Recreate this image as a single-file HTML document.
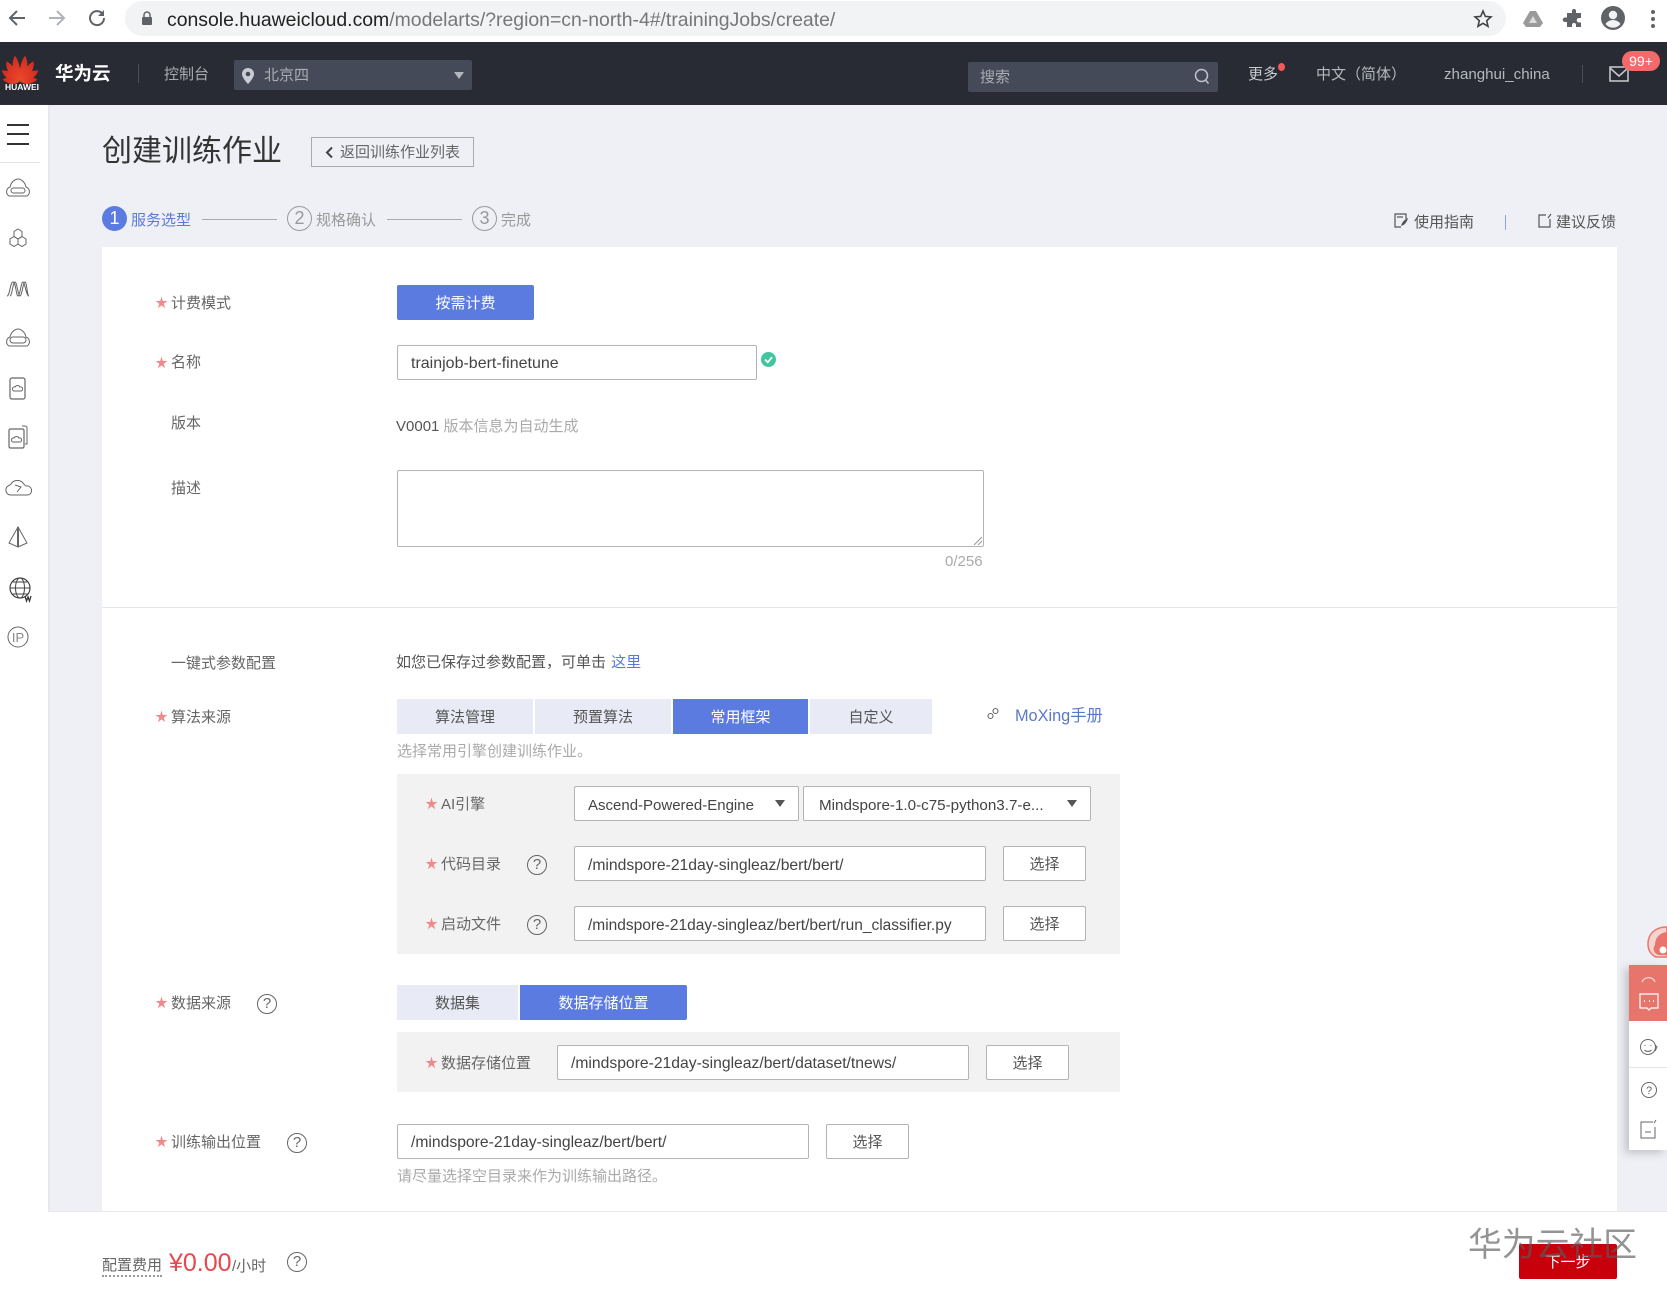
<!DOCTYPE html>
<html lang="zh"><head><meta charset="utf-8"><title>创建训练作业</title>
<style>
*{box-sizing:border-box}
html,body{margin:0;padding:0}
body{width:1667px;height:1297px;position:relative;overflow:hidden;background:#eef0f5;font-family:"Liberation Sans","Noto Sans CJK SC",sans-serif;font-size:15px;color:#555}
.b{position:absolute}
.t{position:absolute;white-space:nowrap;line-height:20px;height:20px;transform:translateY(1px)}
.lab{color:#666}
.star{position:absolute;width:13px;height:13px}
.in{position:absolute;background:#fff;border:1px solid #b4b4b8;border-radius:2px;height:35px;line-height:37px;padding-left:13px;font-size:15.700px;color:#444;white-space:nowrap}
.btn{position:absolute;background:#fff;border:1px solid #b4b4b8;border-radius:2px;height:35px;width:83px;line-height:35px;text-align:center;color:#555}
.tab{position:absolute;height:35px;line-height:37px;text-align:center;background:#e8ebf6;color:#555}
.on{background:#5b7be0;color:#fff}
.q{position:absolute;width:20px;height:20px;border:1.500px solid #666;border-radius:50%;text-align:center;line-height:17px;font-size:15px;color:#666}
.grey{color:#aaa}
svg{position:absolute;overflow:visible}
</style></head><body>
<svg width="0" height="0" style="position:absolute"><defs>
<symbol id="s" viewBox="0 0 12 12"><path d="M6 .5 7.200 4.600 11.500 4.600 8 7.100 9.400 11.300 6 8.700 2.600 11.300 4 7.100.5 4.600 4.800 4.600Z" fill="#ef8a8a"/></symbol>
</defs></svg>

<!-- browser bar -->
<div class="b" style="left:0;top:0;width:1667px;height:42px;background:#fff"></div>
<div class="b" style="left:125px;top:1px;width:1381px;height:35px;border-radius:18px;background:#f1f3f4"></div>
<svg style="left:8px;top:9px" width="18" height="18" fill="none" stroke="#5f6368" stroke-width="2"><path d="M17 9H2M9 2 2 9l7 7"/></svg>
<svg style="left:48px;top:9px" width="18" height="18" fill="none" stroke="#b0b3b8" stroke-width="2"><path d="M1 9h15M9 2l7 7-7 7"/></svg>
<svg style="left:88px;top:9px" width="18" height="18" fill="none" stroke="#5f6368" stroke-width="2"><path d="M15 5.500A7 7 0 1 0 16 9"/><path d="M16 1v6h-6" fill="#5f6368" stroke="none"/></svg>
<svg style="left:141px;top:11px" width="12" height="15"><path d="M3 6V4a3 3 0 0 1 6 0v2" fill="none" stroke="#5f6368" stroke-width="1.500"/><rect x="1" y="6" width="10" height="8" rx="1" fill="#5f6368"/></svg>
<div class="t" style="left:167px;top:9px;font-size:19.420px;color:#777"><span style="color:#222">console.huaweicloud.com</span>/modelarts/?region=cn-north-4#/trainingJobs/create/</div>
<svg style="left:1473px;top:9px" width="20" height="19" fill="none" stroke="#444" stroke-width="1.600"><path d="M10 2 12.300 7.400 18 7.900 13.700 11.700 15 17.300 10 14.300 5 17.300 6.300 11.700 2 7.900 7.700 7.400Z"/></svg>
<svg style="left:1523px;top:10px" width="20" height="18"><path d="M7 1h6l7 12-3 4H3L0 13Z" fill="#9a9a9a"/><path d="M10 6l4 7H6Z" fill="#ddd"/></svg>
<svg style="left:1564px;top:9px" width="20" height="20"><path d="M8 2a2 2 0 0 1 4 0v2h5v5h-2a2.200 2.200 0 0 0 0 4.500h2V18h-5v-2a2 2 0 0 0-4 0v2H3v-5H1a2 2 0 0 1 0-4.500h2V4h5Z" fill="#5f6368"/></svg>
<svg style="left:1601px;top:6px" width="24" height="24"><circle cx="12" cy="12" r="12" fill="#5f6368"/><circle cx="12" cy="9" r="4.200" fill="#f1f3f4"/><path d="M4.500 18a9 9 0 0 1 15 0 9.500 9.500 0 0 1-15 0Z" fill="#f1f3f4"/></svg>
<svg style="left:1651px;top:10px" width="4" height="18" fill="#5f6368"><circle cx="2" cy="2" r="2"/><circle cx="2" cy="9" r="2"/><circle cx="2" cy="16" r="2"/></svg>

<!-- header -->
<div class="b" style="left:0;top:42px;width:1667px;height:63px;background:#282b33"></div>
<svg style="left:0;top:52px" width="40" height="32">
<defs><linearGradient id="g" x1="0" y1="0" x2="0" y2="1"><stop offset="0" stop-color="#cf2a1e"/><stop offset="1" stop-color="#ee4a2c"/></linearGradient></defs>
<g transform="translate(20,29)" fill="url(#g)">
<path d="M-.3 0C-7-7-6.500-19-1.500-26 2-20 3-8-.3 0Z" transform="rotate(-8)"/>
<path d="M.3 0C7-7 6.500-19 1.500-26-2-20-3-8 .3 0Z" transform="rotate(8)"/>
<path d="M-.3 0C-7-6-7-17-2-24 2-18 3-8-.3 0Z" transform="rotate(-30)"/>
<path d="M.3 0C7-6 7-17 2-24-2-18-3-8 .3 0Z" transform="rotate(30)"/>
<path d="M-.3 0C-7-5-7-15-3-21 2-16 3-7-.3 0Z" transform="rotate(-52)"/>
<path d="M.3 0C7-5 7-15 3-21-2-16-3-7 .3 0Z" transform="rotate(52)"/>
<path d="M-.3 0C-6-3-7-11-4-17 1-13 3-6-.3 0Z" transform="rotate(-72)"/>
<path d="M.3 0C6-3 7-11 4-17-1-13-3-6 .3 0Z" transform="rotate(72)"/>
</g></svg>
<div class="t" style="left:5px;top:76px;font-size:8.500px;font-weight:bold;color:#fff">HUAWEI</div>
<div class="t" style="left:55px;top:63px;font-size:18.500px;font-weight:bold;color:#fff">华为云</div>
<div class="b" style="left:138px;top:64px;width:1px;height:19px;background:#4a4d56"></div>
<div class="t" style="left:164px;top:64px;color:#a9acb3">控制台</div>
<div class="b" style="left:234px;top:60px;width:238px;height:30px;border-radius:2px;background:#454a58"></div>
<svg style="left:241px;top:68px" width="14" height="16"><path d="M7 0a6 6 0 0 1 6 6c0 4-6 10-6 10S1 10 1 6a6 6 0 0 1 6-6Z" fill="#c9ccd2"/><circle cx="7" cy="6" r="2.300" fill="#454a58"/></svg>
<div class="t" style="left:264px;top:65px;color:#a9acb3">北京四</div>
<svg style="left:454px;top:72px" width="10" height="7"><path d="M0 0h10L5 7Z" fill="#b2b5bc"/></svg>
<div class="b" style="left:968px;top:62px;width:250px;height:30px;border-radius:2px;background:#454a58"></div>
<div class="t" style="left:980px;top:67px;color:#a9acb3">搜索</div>
<svg style="left:1194px;top:68px" width="16" height="17" fill="none" stroke="#c0c3c9" stroke-width="1.500"><circle cx="7.500" cy="7.500" r="6"/><path d="M11.500 12l3 3.500"/></svg>
<div class="t" style="left:1248px;top:64px;color:#c9ccd2">更多</div>
<div class="b" style="left:1278px;top:63px;width:7px;height:8px;border-radius:50%;background:#f4595b"></div>
<div class="t" style="left:1316px;top:64px;color:#b5b8bf">中文（简体）</div>
<div class="t" style="left:1444px;top:64px;color:#b5b8bf;font-size:15.100px">zhanghui_china</div>
<div class="b" style="left:1582px;top:65px;width:1px;height:18px;background:#4a4d56"></div>
<svg style="left:1609px;top:66px" width="20" height="16" fill="none" stroke="#c0c3c9" stroke-width="1.600"><rect x="1" y="1" width="18" height="14"/><path d="M1 2l9 8 9-8"/></svg>
<div class="b" style="left:1622px;top:51px;width:38px;height:20px;border-radius:10px;background:#f46a6a;color:#fff;text-align:center;line-height:20px;font-size:14px">99+</div>

<!-- sidebar -->
<div class="b" style="left:0;top:105px;width:48px;height:1192px;background:#fff;box-shadow:1px 0 2px rgba(170,175,195,.2)"></div>
<div class="b" style="left:7px;top:124px;width:22px;height:2px;background:#333"></div>
<div class="b" style="left:7px;top:133px;width:22px;height:2px;background:#333"></div>
<div class="b" style="left:7px;top:143px;width:22px;height:2px;background:#333"></div>
<div class="b" style="left:0;top:162px;width:40px;height:1px;background:#e3e3e3"></div>
<svg style="left:0;top:161px" width="48" height="500" fill="none" stroke="#666" stroke-width="1">
<path d="M9 35a5 5 0 0 1 1-9c1-5 5-8 8-8s7 3 8 8a5 5 0 0 1 1 9Z"/><rect x="11" y="27" width="14" height="5" rx="2.500"/>
<g><path d="M18 68l4 2.500v5l-4 2.500-4-2.500v-5Z"/><path d="M14 75.500l4 2.500v5l-4 2.500-4-2.500v-5l4-2.500Z"/><path d="M22 75.500l4 2.500v5l-4 2.500-4-2.500v-5l4-2.500Z"/></g>
<path d="M7 135c3 0 3-14 6-14s3 14 5 14 3-14 5-14 3 14 6 14M10 135c2 0 3-14 5-14s3 14 5 14 3-14 5-14 2 14 4 14"/>
<path d="M9 185a5 5 0 0 1 1-9c1-5 5-8 8-8s7 3 8 8a5 5 0 0 1 1 9Z"/><rect x="10" y="176" width="16" height="6" rx="3"/>
<rect x="10" y="217" width="15" height="21" rx="2" stroke-width="1.200"/><path d="M14 230a2 2 0 0 1 1-4c1-2 4-2 5 0a2 2 0 0 1 1 4Z"/>
<path d="M22 265h3a2 2 0 0 1 2 2v16h-2"/><rect x="9" y="268" width="15" height="19" rx="1.500" stroke-width="1.200"/><path d="M13 281a2 2 0 0 1 1-4c1-2 4-2 5 0a2 2 0 0 1 1 4Z"/>
<path d="M10 334a5 5 0 0 1-2-9c2-1 2-1 3-2 2-4 9-5 12-1 2 2 2 3 3 3a4.500 4.500 0 0 1 2 9Z"/><path d="M15 324l6 2-4 5"/>
<path d="M18 366v20l-9-4 9-16 9 16-9 4" /><path d="M18 366v20" stroke-width="2"/>
<circle cx="20" cy="427" r="10" stroke="#444" stroke-width="1.200"/><ellipse cx="20" cy="427" rx="4.500" ry="10" stroke="#444"/><path d="M10 427h20M12 421h16M12 433h16" stroke="#444"/><path d="M25 435l1.500 5 1.500-4 1.500 4 1.500-5" stroke="#333" stroke-width="1.300"/>
<circle cx="18" cy="476" r="10"/><text x="18" y="481" font-size="13" fill="#888" stroke="none" text-anchor="middle">IP</text>
</svg>

<!-- title -->
<div class="t" style="left:102px;top:131px;height:40px;line-height:40px;font-size:30px;color:#333">创建训练作业</div>
<div class="b" style="left:311px;top:137px;width:163px;height:30px;border:1px solid #aaa"></div>
<svg style="left:325px;top:146px" width="9" height="13" fill="none" stroke="#444" stroke-width="2"><path d="M7 1.500 2 6.500l5 5"/></svg>
<div class="t" style="left:340px;top:142px;color:#666">返回训练作业列表</div>

<!-- steps -->
<div class="b" style="left:102px;top:206px;width:25px;height:25px;border-radius:50%;background:#5b7be0;color:#fff;text-align:center;line-height:25px;font-size:18px">1</div>
<div class="t" style="left:131px;top:210px;color:#5a78d8">服务选型</div>
<div class="b" style="left:202px;top:219px;width:75px;height:1px;background:#aaa"></div>
<div class="b" style="left:287px;top:206px;width:25px;height:25px;border-radius:50%;border:1px solid #999;color:#999;text-align:center;line-height:22px;font-size:18px">2</div>
<div class="t" style="left:316px;top:210px;color:#999">规格确认</div>
<div class="b" style="left:387px;top:219px;width:75px;height:1px;background:#aaa"></div>
<div class="b" style="left:472px;top:206px;width:25px;height:25px;border-radius:50%;border:1px solid #999;color:#999;text-align:center;line-height:22px;font-size:18px">3</div>
<div class="t" style="left:501px;top:210px;color:#999">完成</div>

<svg style="left:1394px;top:213px" width="15" height="15" fill="none" stroke="#555" stroke-width="1.200"><path d="M12 6V1H1v13h6"/><path d="M7 13c1-4 3-6 7-8-1 4-3 7-7 8Z" fill="#555" stroke="none"/><path d="M3 4h6"/></svg>
<div class="t" style="left:1414px;top:212px;color:#555">使用指南</div>
<div class="b" style="left:1505px;top:215px;width:1px;height:15px;background:#8aa4e8"></div>
<svg style="left:1538px;top:213px" width="14" height="15" fill="none" stroke="#555" stroke-width="1.200"><path d="M8 2H1v12h11V6"/><path d="M10 5l3-4"/></svg>
<div class="t" style="left:1556px;top:212px;color:#555">建议反馈</div>

<!-- card -->
<div class="b" style="left:102px;top:247px;width:1515px;height:970px;background:#fff"></div>
<div class="b" style="left:102px;top:607px;width:1515px;height:1px;background:#e3e5ea"></div>

<svg class="star" style="left:155px;top:296px"><use href="#s"/></svg>
<div class="t lab" style="left:171px;top:293px">计费模式</div>
<div class="b on" style="left:397px;top:285px;width:137px;height:35px;border-radius:2px;text-align:center;line-height:37px">按需计费</div>

<svg class="star" style="left:155px;top:356px"><use href="#s"/></svg>
<div class="t lab" style="left:171px;top:352px">名称</div>
<div class="in" style="left:397px;top:345px;width:360px;font-size:16px;line-height:35px">trainjob-bert-finetune</div>
<svg style="left:761px;top:352px" width="15" height="15"><circle cx="7.500" cy="7.500" r="7.500" fill="#3fc6a0"/><path d="M4 7.500 6.800 10.300 11 5.200" fill="none" stroke="#fff" stroke-width="1.800"/></svg>

<div class="t lab" style="left:171px;top:413px">版本</div>
<div class="t" style="left:396px;top:416px">V0001 <span class="grey">版本信息为自动生成</span></div>

<div class="t lab" style="left:171px;top:478px">描述</div>
<div class="b" style="left:397px;top:470px;width:587px;height:77px;border:1px solid #b4b4b8;border-radius:2px;background:#fff"></div>
<svg style="left:973px;top:536px" width="10" height="10" stroke="#999" fill="none"><path d="M1 9 9 1M5 9 9 5"/></svg>
<div class="t grey" style="left:945px;top:551px">0/256</div>

<div class="t lab" style="left:171px;top:653px">一键式参数配置</div>
<div class="t" style="left:396px;top:652px;color:#555">如您已保存过参数配置，可单击 <span style="color:#5a78d8;margin-left:1px">这里</span></div>

<svg class="star" style="left:155px;top:710px"><use href="#s"/></svg>
<div class="t lab" style="left:171px;top:707px">算法来源</div>
<div class="tab" style="left:397px;top:699px;width:136px">算法管理</div>
<div class="tab" style="left:535px;top:699px;width:136px">预置算法</div>
<div class="tab on" style="left:673px;top:699px;width:135px">常用框架</div>
<div class="tab" style="left:810px;top:699px;width:122px">自定义</div>
<svg style="left:987px;top:707px" width="12" height="13" fill="none" stroke="#666" stroke-width="1.100"><circle cx="3.500" cy="9" r="2.500"/><circle cx="8.500" cy="4" r="2.500"/></svg>
<div class="t" style="left:1015px;top:705px;color:#5a78c8;font-size:16.300px">MoXing手册</div>
<div class="t grey" style="left:397px;top:741px">选择常用引擎创建训练作业。</div>

<div class="b" style="left:397px;top:774px;width:723px;height:180px;background:#f2f2f2"></div>
<svg class="star" style="left:425px;top:797px"><use href="#s"/></svg>
<div class="t lab" style="left:441px;top:794px">AI引擎</div>
<div class="in" style="left:574px;top:786px;width:225px;font-size:15px">Ascend-Powered-Engine</div>
<svg style="left:775px;top:800px" width="10" height="7"><path d="M0 0h10L5 7Z" fill="#555"/></svg>
<div class="in" style="left:803px;top:786px;width:288px;padding-left:15px;font-size:15.200px">Mindspore-1.0-c75-python3.7-e...</div>
<svg style="left:1067px;top:800px" width="10" height="7"><path d="M0 0h10L5 7Z" fill="#555"/></svg>

<svg class="star" style="left:425px;top:857px"><use href="#s"/></svg>
<div class="t lab" style="left:441px;top:854px">代码目录</div>
<div class="q" style="left:527px;top:855px">?</div>
<div class="in" style="left:574px;top:846px;width:412px">/mindspore-21day-singleaz/bert/bert/</div>
<div class="btn" style="left:1003px;top:846px">选择</div>

<svg class="star" style="left:425px;top:917px"><use href="#s"/></svg>
<div class="t lab" style="left:441px;top:914px">启动文件</div>
<div class="q" style="left:527px;top:915px">?</div>
<div class="in" style="left:574px;top:906px;width:412px;font-size:15.500px">/mindspore-21day-singleaz/bert/bert/run_classifier.py</div>
<div class="btn" style="left:1003px;top:906px">选择</div>

<svg class="star" style="left:155px;top:996px"><use href="#s"/></svg>
<div class="t lab" style="left:171px;top:993px">数据来源</div>
<div class="q" style="left:257px;top:994px">?</div>
<div class="tab" style="left:397px;top:985px;width:121px">数据集</div>
<div class="tab on" style="left:520px;top:985px;width:167px;border-radius:0 2px 2px 0">数据存储位置</div>
<div class="b" style="left:397px;top:1032px;width:723px;height:60px;background:#f2f2f2"></div>
<svg class="star" style="left:425px;top:1056px"><use href="#s"/></svg>
<div class="t lab" style="left:441px;top:1053px">数据存储位置</div>
<div class="in" style="left:557px;top:1045px;width:412px;line-height:36px">/mindspore-21day-singleaz/bert/dataset/tnews/</div>
<div class="btn" style="left:986px;top:1045px">选择</div>

<svg class="star" style="left:155px;top:1135px"><use href="#s"/></svg>
<div class="t lab" style="left:171px;top:1132px">训练输出位置</div>
<div class="q" style="left:287px;top:1133px">?</div>
<div class="in" style="left:397px;top:1124px;width:412px;line-height:35px">/mindspore-21day-singleaz/bert/bert/</div>
<div class="btn" style="left:826px;top:1124px">选择</div>
<div class="t grey" style="left:397px;top:1166px">请尽量选择空目录来作为训练输出路径。</div>

<!-- footer -->
<div class="b" style="left:48px;top:1211px;width:1619px;height:86px;background:#fff;border-top:1px solid #e8e8ec"></div>
<div class="t" style="left:102px;top:1255px;color:#666">配置费用</div>
<div class="b" style="left:102px;top:1275px;width:60px;height:0;border-top:2px dotted #999"></div>
<div class="t" style="left:169px;top:1247px;height:30px;line-height:30px;font-size:25px;color:#e5484d">¥0.00</div>
<div class="t" style="left:232px;top:1256px;color:#666">/小时</div>
<div class="q" style="left:287px;top:1252px">?</div>
<div class="b" style="left:1519px;top:1244px;width:98px;height:35px;background:#c7000b;border-radius:2px;color:#fff;text-align:center;line-height:38px">下一步</div>
<div class="t" style="left:1468px;top:1224px;height:40px;line-height:40px;font-size:33.800px;color:rgba(90,90,90,.65)">华为云社区</div>

<!-- float panel -->
<svg style="left:1647px;top:926px" width="20" height="32"><path d="M20 1C8 1 1 8 1 18c0 6 3 11 8 13h11Z" fill="#f6d3cf" stroke="#e8756b" stroke-width="1.500"/><path d="M20 6C12 7 8 12 8 19c-3 3-1 9 4 10h8Z" fill="#e8756b"/><circle cx="16" cy="24" r="3.500" fill="#fff"/></svg>
<div class="b" style="left:1629px;top:965px;width:38px;height:185px;background:#fff;box-shadow:-4px 3px 8px rgba(90,90,100,.3)"></div>
<div class="b" style="left:1629px;top:965px;width:38px;height:56px;background:#e8756b"></div>
<div class="b" style="left:1629px;top:1067px;width:38px;height:1px;background:#e5e5e5"></div>
<svg style="left:1629px;top:965px" width="38" height="185" fill="none">
<path d="M13 17a7 7 0 0 1 13 0" stroke="#f8dcd8" stroke-width="1.200"/>
<path d="M11 29h18v14h-7l-2 2-2-2h-7Z" stroke="#fff" stroke-width="1.200"/><path d="M15 36h1M20 36h1M24 36h1" stroke="#fff" stroke-width="1.800"/>
<circle cx="19" cy="82" r="7.500" stroke="#666"/><path d="M16 80v1M22 80v1M15.500 85c2 2 5 2 7 0M26 80l2 2-2 4" stroke="#666"/>
<circle cx="20" cy="125" r="7.500" stroke="#666"/><text x="20" y="129" font-size="11" fill="#666" text-anchor="middle">?</text>
<path d="M24 157h-12v16h14v-11M25 158l2-3M16 167h6" stroke="#666"/>
</svg>
</body></html>
